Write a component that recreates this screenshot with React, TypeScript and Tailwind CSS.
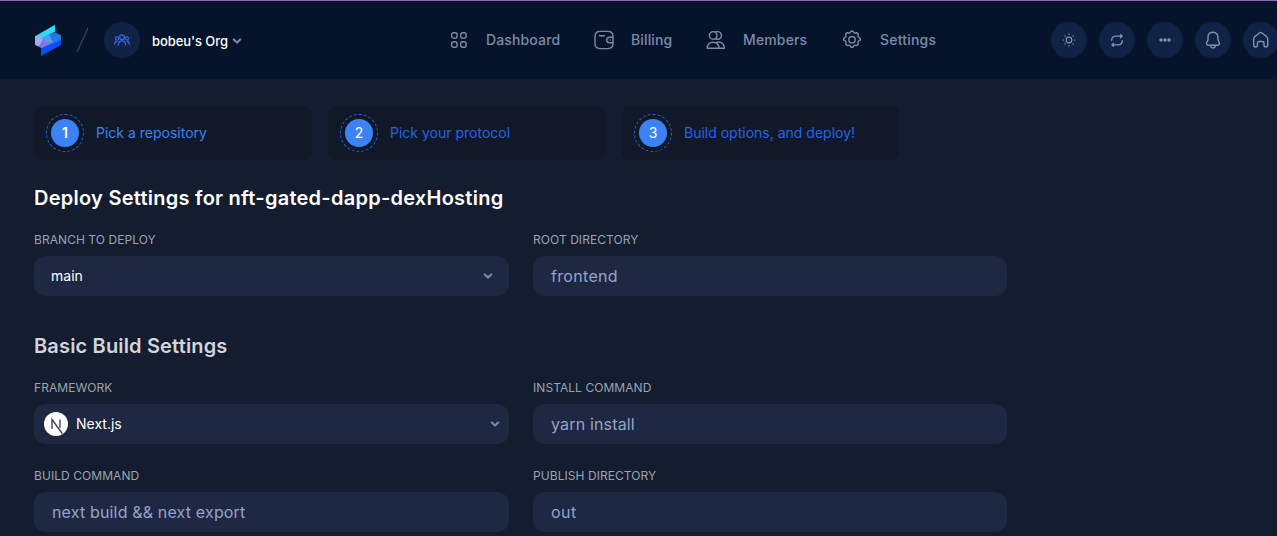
import React from "react";

function Chevron({ className = "" }: { className?: string }) {
  return (
    <svg width="10" height="6" viewBox="0 0 10 6" fill="none" className={`shrink-0 ${className}`}>
      <path d="M1.8 1.4 5 4.4 8.2 1.4" stroke="#7688b5" strokeWidth="2.1" strokeLinecap="round" strokeLinejoin="round" />
    </svg>
  );
}

function Logo() {
  return (
    <svg width="26" height="32" viewBox="0 0 26 32" className="shrink-0">
      <path d="M0 12.5 8 12 20 8.5 26 11.5V20L7 24 0 21Z" fill="#5f7fe8" />
      <path d="M0 12.5 8 15 6 23.5 0 20.5Z" fill="#a4a9f8" />
      <path d="M8 15 18 17 7 24 4 22.5Z" fill="#7f74d8" />
      <path d="M8 13 15 10.5 19 17 10 19Z" fill="#5f97ee" />
      <path d="M14 10.5 20 8.5 26 11.5V17L18 18Z" fill="#1b7be8" />
      <path d="M0 12.2 20 .8V7.8L5 14.5 0 15.5Z" fill="#2bd9fb" />
      <path d="M0 12.5 5 11.500 8 14 0 17Z" fill="#8fb4fb" />
      <path d="M6 24.5 26 15.5V21L6 32Z" fill="#0450f0" />
    </svg>
  );
}

const stroke = {
  fill: "none",
  stroke: "currentColor",
  strokeLinecap: "round" as const,
  strokeLinejoin: "round" as const,
};

function GridIcon() {
  return (
    <svg width="20" height="20" viewBox="0 0 20 20" {...stroke} strokeWidth="1.4">
      <rect x="2.7" y="2.7" width="5.4" height="5.4" rx="1.9" />
      <rect x="11.7" y="2.7" width="5.4" height="5.4" rx="1.9" />
      <rect x="2.7" y="11.8" width="5.4" height="5.4" rx="1.9" />
      <rect x="11.7" y="11.8" width="5.4" height="5.4" rx="1.9" />
    </svg>
  );
}

function WalletIcon() {
  return (
    <svg width="20" height="20" viewBox="0 0 20 20" {...stroke} strokeWidth="1.4">
      <path d="M19 7V6.4C19 3.4 17 1.4 14 1.4H6C3 1.4 1 3.4 1 6.4v7.2c0 3 2 5 5 5h8c3 0 5-2 5-5V13" />
      <path d="M19 7.2h-3.5a2.8 2.8 0 0 0 0 5.6H19ZM15.9 10h.1M5.5 5.8h4.8" />
    </svg>
  );
}

function MembersIcon() {
  return (
    <svg width="20" height="20" viewBox="0 0 20 20" {...stroke} strokeWidth="1.4">
      <circle cx="7.2" cy="5.4" r="3.8" />
      <path d="M9.4 2.3c.8-.6 1.7-.9 2.700-.7a3.900 3.900 0 0 1 0 7.700c-1 .1-1.900-.1-2.700-.7" />
      <path d="M1.200 18.200c0-3.400 2.200-5.900 5.900-5.900s5.900 2.500 5.900 5.900ZM11 12.200c4.500-.9 7.400 2 7.400 6H13" />
    </svg>
  );
}

function GearIcon() {
  return (
    <svg width="20" height="20" viewBox="0 0 20 20" {...stroke} strokeWidth="1.4">
      <path d="m8.1 2.7 1-1.500h1.800l1 1.500 1.300.5 1.800-.4 1.300 1.300-.4 1.800.5 1.300 1.900 1.100v1.800l-1.900 1.100-.5 1.300.4 1.800-1.300 1.300-1.800-.4-1.300.5-1 1.600H9.100l-1-1.600-1.300-.5-1.800.4-1.300-1.300.4-1.800-.5-1.300-1.900-1.100V8.300l1.900-1.100.5-1.300-.4-1.800L5 2.800l1.800.4Z" />
      <circle cx="10" cy="9.700" r="3.200" />
    </svg>
  );
}

function TeamIcon() {
  return (
    <svg width="16" height="12" viewBox="0 0 16 12" {...stroke} strokeWidth="1.2" className="text-[#3b66dd]">
      <circle cx="8" cy="3.2" r="2.4" />
      <path d="M4.4 10.9c0-2.5 1.3-4.1 3.6-4.1s3.6 1.6 3.6 4.1" />
      <circle cx="3.1" cy="4.4" r="1.6" />
      <circle cx="12.9" cy="4.4" r="1.6" />
      <path d="M.7 10.2c0-1.9.9-3 2.5-3.1M15.3 10.2c0-1.9-.9-3-2.5-3.1" />
    </svg>
  );
}

function SunIcon() {
  return (
    <svg width="16" height="16" viewBox="0 0 16 16" {...stroke} strokeWidth="1.2">
      <circle cx="8" cy="8" r="2.8" />
      <path d="M8 2v.5M8 13.5v.5M2 8h.5M13.5 8h.5M3.8 3.8l.3.3M11.9 11.9l.3.3M3.8 12.2l.3-.3M11.9 4.1l.3-.3" />
    </svg>
  );
}

function SyncIcon() {
  return (
    <svg width="16" height="16" viewBox="0 0 16 16" {...stroke} strokeWidth="1.3">
      <path d="M2.7 8.400C2.7 5.900 4.300 4.100 7 4.100h5.800M11.500 2.700l1.600 1.400-1.600 1.600" />
      <path d="M13.300 8.600c0 2.500-1.600 4.300-4.300 4.300H3.200M4.500 14.300l-1.600-1.400 1.600-1.600" />
    </svg>
  );
}

function DotsIcon() {
  return (
    <svg width="16" height="16" viewBox="0 0 16 16" fill="currentColor">
      <circle cx="4" cy="8" r="1.7" />
      <circle cx="8" cy="8" r="1.7" />
      <circle cx="12" cy="8" r="1.7" />
    </svg>
  );
}

function BellIcon() {
  return (
    <svg width="18" height="18" viewBox="0 0 18 18" {...stroke} strokeWidth="1.4">
      <path d="M9 1.2c-3.2 0-5 2.3-5 5.1v2.1c0 1.1-.4 1.6-1 2.6-1.1 1.8-.4 3.2 1.5 3.2h9c1.9 0 2.6-1.4 1.5-3.2-.6-1-1-1.5-1-2.6V6.3c0-2.8-1.8-5.1-5-5.1Z" />
      <path d="M6.7 15.5c.4.9 1.2 1.5 2.3 1.5s1.9-.6 2.3-1.5" />
    </svg>
  );
}

function HomeIcon() {
  return (
    <svg width="18" height="18" viewBox="0 0 18 18" {...stroke} strokeWidth="1.4">
      <path d="M1.700 7.700c0-.9.3-1.400 1-2L7.400 2c.8-.7 1.800-.7 2.600 0l4.700 3.700c.7.6 1 1.100 1 2v6c0 1.500-.8 2.300-2.200 2.300-.9 0-1.500-.5-1.500-1.400v-2.200c0-1.200-.7-1.900-1.800-1.900H7.200c-1.100 0-1.800.7-1.800 1.900v2.200c0 .9-.6 1.400-1.500 1.400-1.400 0-2.200-.8-2.200-2.300Z" />
    </svg>
  );
}

function NextIcon() {
  return (
    <svg width="24" height="24" viewBox="0 0 24 24" fill="none">
      <circle cx="12" cy="12" r="12" fill="#fff" />
      <path d="M8 17V7.5L18.2 21.5M16 7.5v8.3" stroke="#3a445a" strokeWidth="1.4" />
    </svg>
  );
}

const nav = [
  { label: "Dashboard", icon: <GridIcon />, width: "w-[145px]" },
  { label: "Billing", icon: <WalletIcon />, width: "w-[112px]" },
  { label: "Members", icon: <MembersIcon />, width: "w-[136px]" },
  { label: "Settings", icon: <GearIcon />, width: "w-[100px]" },
];

const actions = [
  { name: "theme", icon: <SunIcon /> },
  { name: "sync", icon: <SyncIcon /> },
  { name: "more", icon: <DotsIcon /> },
  { name: "alerts", icon: <BellIcon /> },
  { name: "home", icon: <HomeIcon /> },
];

function Header() {
  return (
    <header className="flex h-[79px] items-center overflow-hidden border-t border-[#8b68b4] bg-[#05142a] pl-[35px]">
      <Logo />
      <svg width="14" height="28" viewBox="0 0 14 28" className="ml-[14px] shrink-0">
        <path d="M2 26 13 2" stroke="#3a475c" strokeWidth="1.2" />
      </svg>
      <div className="ml-[15px] flex size-9 shrink-0 items-center justify-center rounded-full bg-[#102347]">
        <TeamIcon />
      </div>
      <div className="ml-3 flex w-[297px] shrink-0 items-center pt-[2px] text-[13px] leading-5 font-medium text-white">
        <span className="w-[77px] tracking-[-0.005em] whitespace-nowrap">bobeu's Org</span>
        <Chevron className="ml-[3px]" />
      </div>
      <nav className="flex w-[602px] shrink-0 items-center text-sm font-medium tracking-[0.01em] text-[#7c8aaa]">
        {nav.map((n) => (
          <div key={n.label} className={`flex shrink-0 items-center ${n.width}`}>
            {n.icon}
            <span className={n.label === "Settings" ? "ml-[18px] tracking-[0.015em]" : "ml-[17px]"}>{n.label}</span>
          </div>
        ))}
      </nav>
      <div className="flex gap-3 text-[#8492ae]">
        {actions.map((a) => (
          <div key={a.name} className="flex size-9 shrink-0 items-center justify-center rounded-full bg-[#102347]">
            {a.icon}
          </div>
        ))}
      </div>
    </header>
  );
}

function Step({ n, label, active }: { n: number; label: string; active?: boolean }) {
  return (
    <div className="flex h-[54px] items-center rounded-lg bg-[#111827] pl-3">
      <div className="flex size-[38px] items-center justify-center rounded-full border border-dashed border-[#2563eb]">
        <div className={`flex size-7 items-center justify-center rounded-full bg-[#3b82f6] text-sm text-white ${active ? "font-semibold" : ""}`}>
          {n}
        </div>
      </div>
      <span className={`ml-3 text-sm ${active ? "text-[#3b82f6]" : "text-[#2563eb]"}`}>{label}</span>
    </div>
  );
}

function Field({ label, children }: { label: string; children: React.ReactNode }) {
  return (
    <div>
      <div className="text-xs leading-4 tracking-[0.005em] text-[#9ca3af]">{label}</div>
      <div className="mt-2 flex h-10 items-center rounded-xl bg-[#1e2842]">{children}</div>
    </div>
  );
}

function Value({ text, className = "tracking-[0.01em]" }: { text: string; className?: string }) {
  return <span className={`pl-[18px] text-base text-[#95a3c9] ${className}`}>{text}</span>;
}

export default function App() {
  return (
    <div className="h-[536px] w-[1277px] overflow-hidden bg-[#141c2f] font-['Inter',sans-serif]">
      <Header />
      <main className="pl-[34px]">
        <div className="grid grid-cols-[278px_278px_277px] gap-4 pt-[27px]">
          <Step n={1} label="Pick a repository" active />
          <Step n={2} label="Pick your protocol" />
          <Step n={3} label="Build options, and deploy!" />
        </div>
        <h1 className="mt-6 text-xl leading-7 font-semibold tracking-[0.013em] text-white">
          Deploy Settings for nft-gated-dapp-dexHosting
        </h1>
        <div className="mt-5 grid grid-cols-[475px_474px] gap-6">
          <Field label="BRANCH TO DEPLOY">
            <span className="flex-1 pl-[17px] text-sm text-white">main</span>
            <Chevron className="mr-4" />
          </Field>
          <Field label="ROOT DIRECTORY">
            <Value text="frontend" className="tracking-[0.02em]" />
          </Field>
        </div>
        <h2 className="mt-9 text-xl leading-7 font-semibold tracking-[0.008em] text-[#d1d5db]">Basic Build Settings</h2>
        <div className="mt-5 grid grid-cols-[475px_474px] gap-6">
          <Field label="FRAMEWORK">
            <div className="ml-[10px] flex flex-1 items-center gap-2 text-sm text-white">
              <NextIcon />
              Next.js
            </div>
            <Chevron className="mr-[9px]" />
          </Field>
          <Field label="INSTALL COMMAND">
            <Value text="yarn install" />
          </Field>
          <Field label="BUILD COMMAND">
            <Value text="next build && next export" />
          </Field>
          <Field label="PUBLISH DIRECTORY">
            <Value text="out" className="tracking-[0.03em]" />
          </Field>
        </div>
      </main>
    </div>
  );
}
